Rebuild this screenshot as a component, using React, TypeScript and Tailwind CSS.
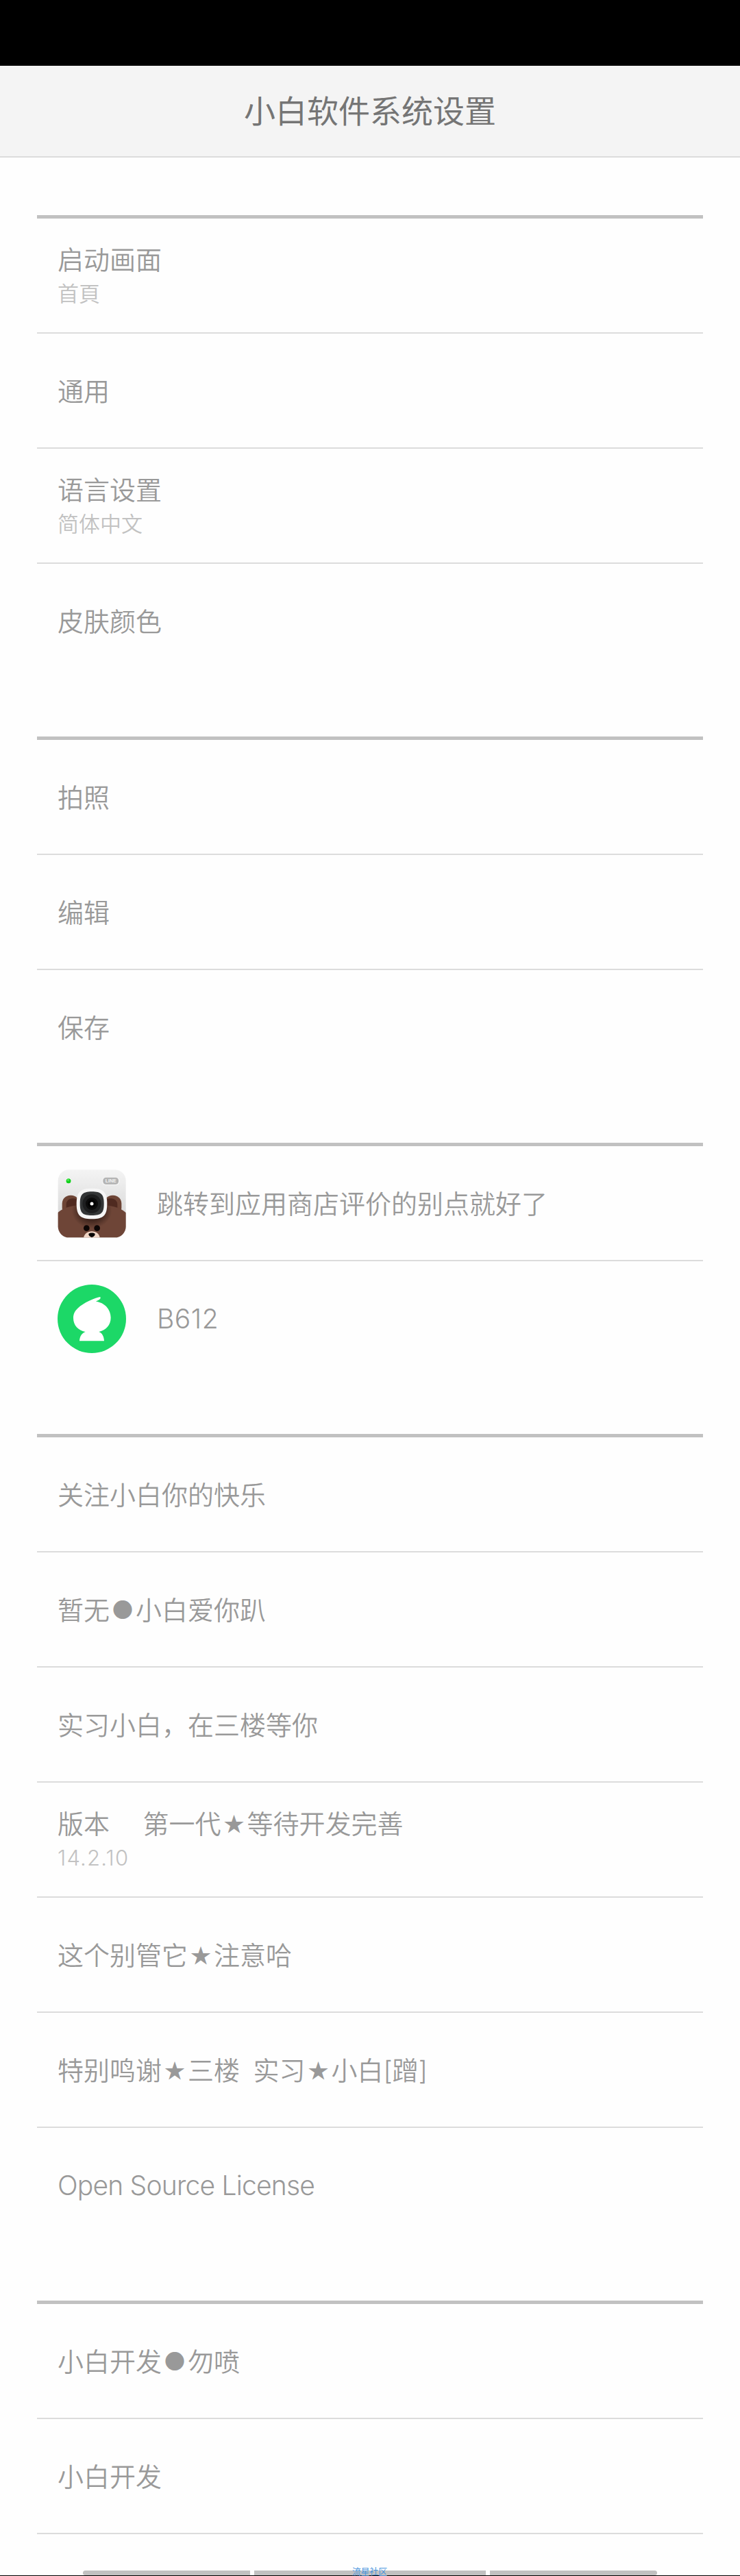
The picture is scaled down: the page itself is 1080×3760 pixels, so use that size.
import React from "react";

type Item = {
  label: string;
  sub?: string;
  icon?: React.ReactNode;
  labelClass?: string;
  subClass?: string;
};

const LineCameraIcon: React.FC = () => (
  <svg viewBox="0 0 300 300" className="w-[100px] h-[100px] shrink-0">
    <defs>
      <linearGradient id="body" x1="0" y1="0" x2="0" y2="1">
        <stop offset="0" stopColor="#f4f4f4" />
        <stop offset="0.6" stopColor="#dcdcdc" />
      </linearGradient>
      <radialGradient id="shade" cx="0.5" cy="0.5" r="0.5">
        <stop offset="0.5" stopColor="#2c1812" stopOpacity="0.75" />
        <stop offset="1" stopColor="#2c1812" stopOpacity="0" />
      </radialGradient>
      <clipPath id="frame">
        <rect x="2" y="1" width="297" height="297" rx="48" />
      </clipPath>
      <clipPath id="head">
        <path d="M0 190C10 180 20 176 28 171C60 158 100 154 150 154S240 158 272 171C280 176 290 180 300 190V300H0Z" />
      </clipPath>
    </defs>
    <g clipPath="url(#frame)">
      <rect width="300" height="300" fill="url(#body)" />
      <circle cx="48" cy="50" r="13" fill="#f6f6f6" />
      <circle cx="48" cy="50" r="10.5" fill="#12cf1c" />
      <circle cx="46" cy="46" r="5" fill="#4be84f" />
      <rect x="194" y="32" width="78" height="38" rx="17" fill="#f3f3f3" />
      <rect x="199" y="35" width="68" height="30" rx="13" fill="#b4b4b4" />
      <text
        x="233"
        y="58"
        textAnchor="middle"
        fontSize="21"
        fontWeight="700"
        fill="#f4f4f4"
        fontFamily="Liberation Sans, sans-serif">
        LINE
      </text>
      <rect x="20" y="113" width="76" height="90" rx="36" fill="#6d4435" />
      <rect x="38" y="127" width="60" height="70" rx="26" fill="#4f2a20" />
      <rect x="204" y="113" width="76" height="90" rx="36" fill="#6d4435" />
      <rect x="202" y="127" width="60" height="70" rx="26" fill="#4f2a20" />
      <g clipPath="url(#head)">
        <rect width="300" height="300" fill="#6e4537" />
        <ellipse cx="150" cy="180" rx="88" ry="78" fill="url(#shade)" />
      </g>
      <circle cx="127" cy="257" r="13" fill="#0d0605" />
      <circle cx="173" cy="257" r="13" fill="#0d0605" />
      <path d="M114 300C116 282 132 271 150 271S184 282 185 300Z" fill="#efd4c4" />
      <path
        d="M136 283C136 276 164 276 164 283C164 290 157 296 150 297C143 296 136 290 136 283Z"
        fill="#080403"
      />
    </g>
    <path
      d="M150 83C201 83 217 99 217 150S201 217 150 217S83 201 83 150S99 83 150 83Z"
      fill="#f6f6f6"
    />
    <path
      d="M150 97C191 97 203 109 203 150S191 201 150 201S98 190 98 150S109 97 150 97Z"
      fill="#333536"
    />
    <circle cx="150" cy="150" r="41" fill="#1d1e1f" />
    <circle cx="150" cy="150" r="27" fill="#0b0b0b" />
    <circle cx="150" cy="150" r="17" fill="#000" />
    <circle cx="150" cy="150" r="7.5" fill="#fff" />
  </svg>
);

const B612Icon: React.FC = () => (
  <svg viewBox="0 0 300 300" className="w-[100px] h-[100px] shrink-0">
    <circle cx="150" cy="150" r="150" fill="#1cd867" />
    <path
      d="M187 54C162 58 115 79 88 104C74 117 69 131 69 147C69 179 91 201 122 207C108 212 97 225 96 247H204C203 226 195 212 181 207C212 200 233 178 233 145C233 109 206 78 168 74C174 70 181 68 187 62C188 58 188 56 187 54Z"
      fill="#fff"
    />
  </svg>
);

const sections: Item[][] = [
  [
    { label: "启动画面", sub: "首頁" },
    { label: "通用" },
    { label: "语言设置", sub: "简体中文" },
    { label: "皮肤颜色" },
  ],
  [{ label: "拍照" }, { label: "编辑" }, { label: "保存" }],
  [
    { label: "跳转到应用商店评价的别点就好了", icon: <LineCameraIcon /> },
    { label: "B612", icon: <B612Icon />, labelClass: "text-[39px] tracking-[0.5px]" },
  ],
  [
    { label: "关注小白你的快乐" },
    { label: "暂无●小白爱你趴" },
    { label: "实习小白，在三楼等你" },
    {
      label: "版本     第一代★等待开发完善",
      sub: "14.2.10",
      subClass: "tracking-[1.2px]",
    },
    { label: "这个别管它★注意哈" },
    { label: "特别鸣谢★三楼  实习★小白[蹭]" },
    { label: "Open Source License", labelClass: "text-[39px] tracking-[-0.8px]" },
  ],
  [{ label: "小白开发●勿喷" }, { label: "小白开发" }],
];

// Symbols are drawn a bit smaller, but still take one full character
const Label: React.FC<{ text: string }> = ({ text }) => (
  <>
    {text.split(/([●★])/).map((part, i) =>
      part === "●" || part === "★" ? (
        <span
          key={i}
          className="inline-block w-[38px] text-center text-[30px] leading-none align-[3px] font-['Noto_Sans_CJK_SC',sans-serif]">
          {part}
        </span>
      ) : (
        part
      )
    )}
  </>
);

const Row: React.FC<{ item: Item; divider: boolean }> = ({ item, divider }) => (
  <li
    className={
      divider
        ? "h-[168px] pl-[30px] pt-0.5 flex items-center gap-[45px] border-b-2 border-[#dcdcdc]"
        : "h-[168px] pl-[30px] flex items-center gap-[45px]"
    }>
    {item.icon}
    <div className="whitespace-pre">
      <div
        className={`${item.labelClass ?? "text-[38px] [word-spacing:-1px]"} leading-[50px] text-[#999]`}>
        <Label text={item.label} />
      </div>
      {item.sub && (
        <div className={`${item.subClass ?? ""} pt-px text-[31px] leading-[48px] text-[#c2c2c2]`}>
          {item.sub}
        </div>
      )}
    </div>
  </li>
);

const App: React.FC = () => {
  return (
    <div className="w-[1080px] h-[3760px] flex flex-col overflow-hidden bg-[#fefefe] font-[350] font-['Inter','Noto_Sans_CJK_SC',sans-serif]">
      <div className="h-24 bg-black"></div>
      <header className="h-[134px] flex justify-center items-center bg-[#f4f4f4] border-b-2 border-[#dcdcdc]">
        <h1 className="text-[46px] leading-none font-normal text-[#757575]">小白软件系统设置</h1>
      </header>

      <main className="px-[54px] pt-[84px] flex flex-col gap-[84px]">
        {sections.map((items, i) => (
          <ul key={i} className="border-t-[5px] border-[#c1c1c1]">
            {items.map((item, j) => (
              <Row
                key={item.label}
                item={item}
                divider={j < items.length - 1 || i === sections.length - 1}
              />
            ))}
          </ul>
        ))}
      </main>

      <footer className="relative mt-auto border-b border-black">
        <div className="mx-[121px] h-[7px] flex gap-1.5">
          <div className="w-[244px] bg-[#c1c1c1] rounded-l"></div>
          <div className="w-[338px] bg-[#c1c1c1]"></div>
          <div className="w-[244px] bg-[#c1c1c1] rounded-r"></div>
        </div>
        <span className="absolute left-[514px] -top-1 text-[12.8px] leading-[11px] font-normal text-[#4a94dc]">
          流星社区
        </span>
      </footer>
    </div>
  );
};

export default App;
